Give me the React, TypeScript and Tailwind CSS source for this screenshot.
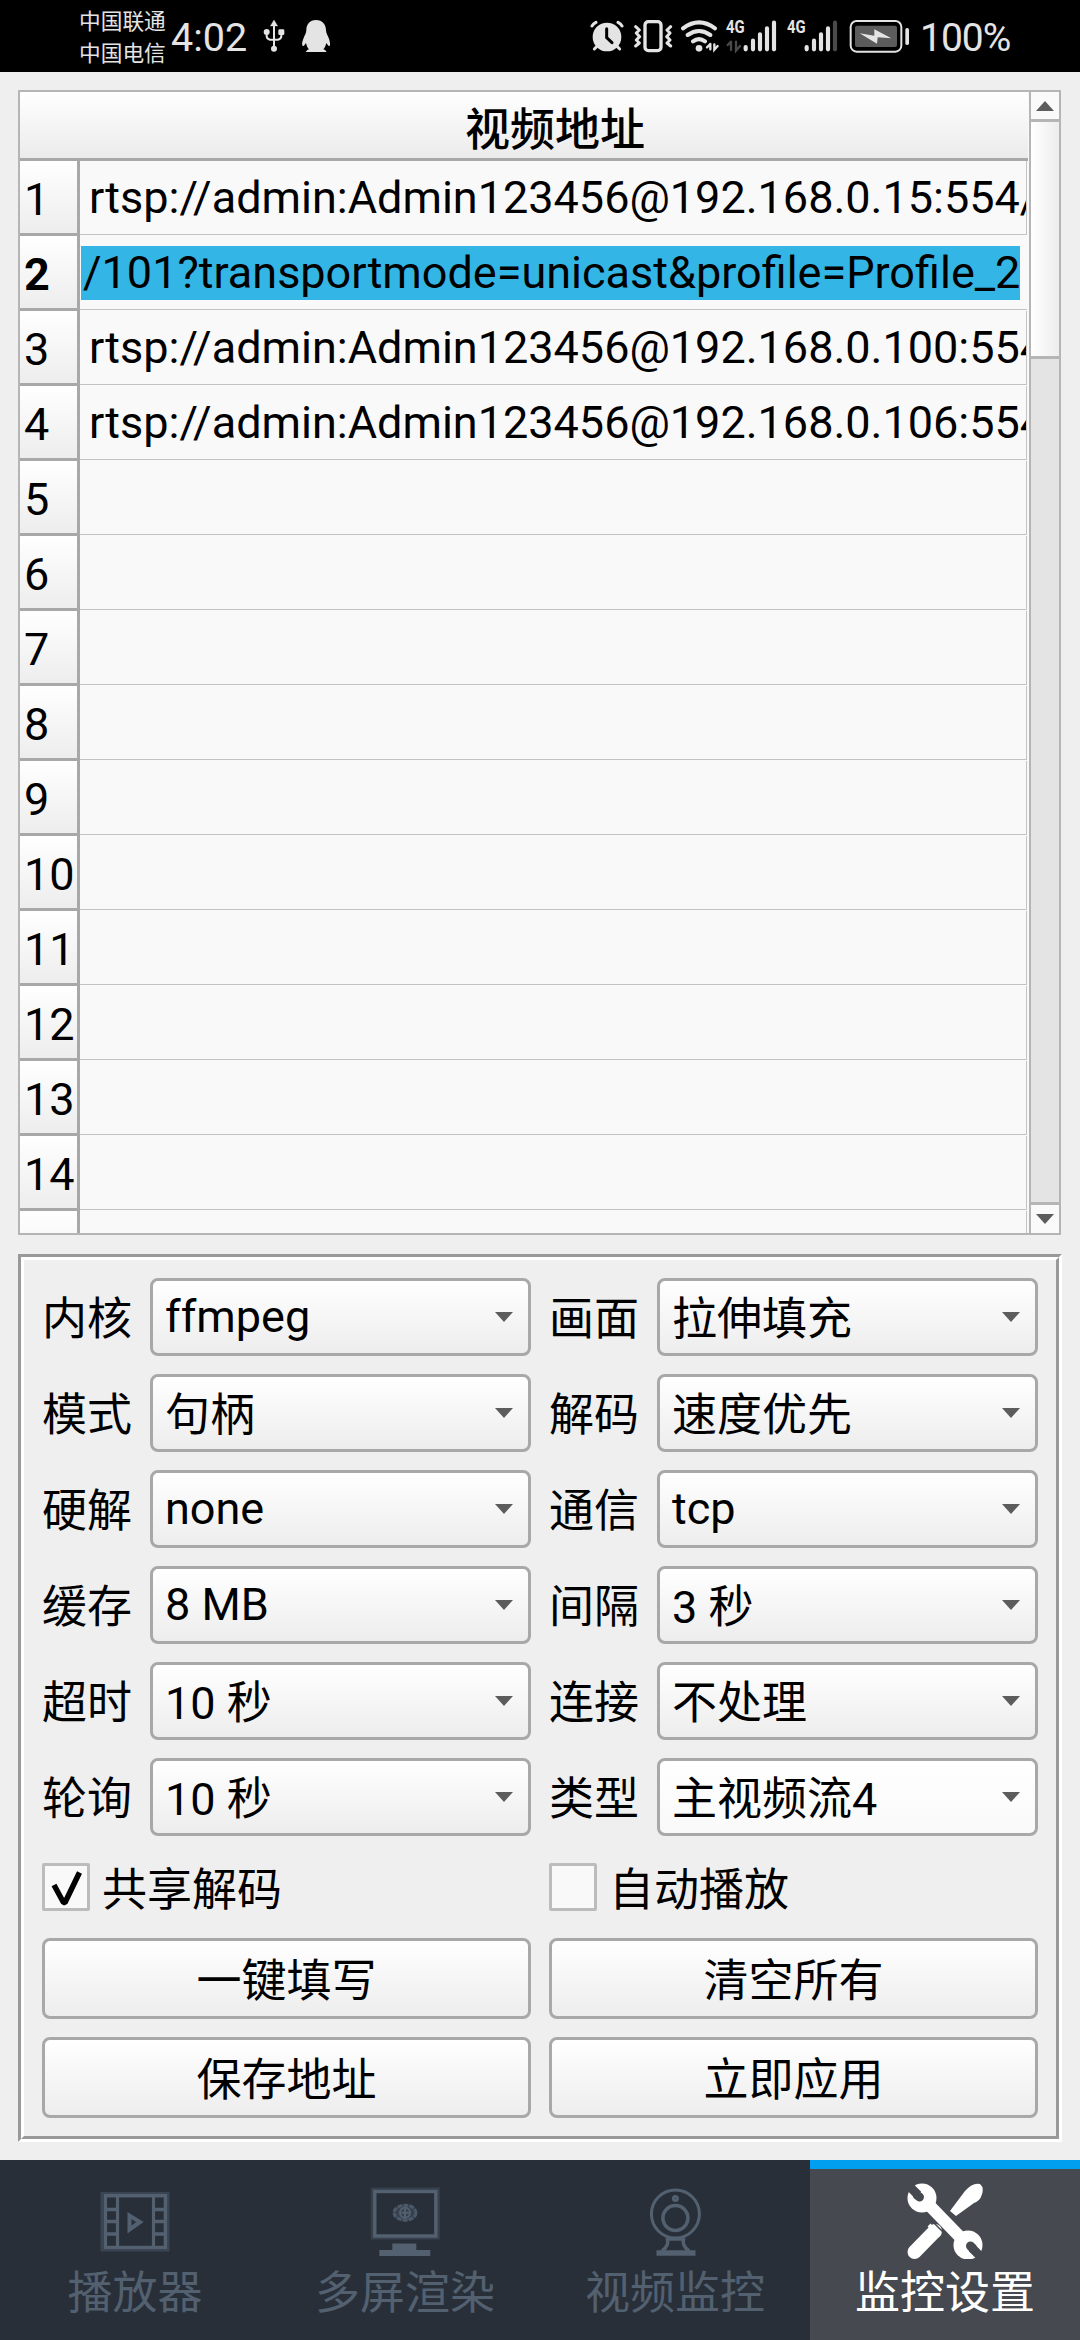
import React from "react";

const rows: string[] = [
  "rtsp://admin:Admin123456@192.168.0.15:554/",
  "/101?transportmode=unicast&profile=Profile_2",
  "rtsp://admin:Admin123456@192.168.0.100:554",
  "rtsp://admin:Admin123456@192.168.0.106:554",
  "", "", "", "", "", "", "", "", "", "", "",
];

const fields: [string, string, boolean?][] = [
  ["内核", "ffmpeg"],
  ["画面", "拉伸填充"],
  ["模式", "句柄"],
  ["解码", "速度优先"],
  ["硬解", "none"],
  ["通信", "tcp"],
  ["缓存", "8 MB"],
  ["间隔", "3 秒"],
  ["超时", "10 秒"],
  ["连接", "不处理"],
  ["轮询", "10 秒"],
  ["类型", "主视频流4", true],
];

const hasCjk = (s: string) => /[\u4e00-\u9fff]/.test(s);

function Signal({ full }: { full: boolean }) {
  return (
    <div className="relative h-[34px] w-[52px]">
      <span className="absolute left-0 top-0 origin-left scale-x-[0.85] text-[17.5px] font-bold leading-[17px]">4G</span>
      <svg className="block h-[34px] w-[52px]" viewBox="468 57 156 102" stroke="#e4e4e4" strokeWidth="12.5" strokeLinecap="round">
        {full && (
          <path d="M483 125 V150 M483 125 L473 135 M498 125 V152 L510 138" stroke="#4a4a4a" strokeWidth="7" fill="none" />
        )}
        <path d="M527 141V148M549 122V148M570 103V148M591 85V148" />
        <path d="M612 68V148" stroke={full ? "#e4e4e4" : "#4a4a4a"} />
      </svg>
    </div>
  );
}

function StatusBar() {
  return (
    <div className="flex h-[72px] shrink-0 items-start bg-black text-[#e4e4e4]">
      <div className="ml-[79px] flex w-[90px] flex-col pt-[6px] text-[21.7px] leading-[32px]">
        <span className="h-8">中国联通</span>
        <span className="h-8">中国电信</span>
      </div>
      <span className="ml-[2px] w-[92px] pt-[14px] text-[39.5px] leading-[48px]">4:02</span>
      <svg className="mt-[19px] h-[34px] w-[22px]" viewBox="609 57 66 102" fill="#e4e4e4" stroke="#e4e4e4">
        <path d="M642 60l11 18h-22z" strokeWidth="1" />
        <path d="M642 74V146M620 98V108Q620 117 630 119L654 119Q664 117 664 108V98" fill="none" strokeWidth="6" />
        <circle cx="642" cy="146" r="9" stroke="none" />
        <circle cx="620" cy="96" r="9" stroke="none" />
        <rect x="655" y="88" width="18" height="17" rx="4" stroke="none" />
      </svg>
      <svg className="ml-4 mt-[19px] h-[34px] w-[30px]" viewBox="723 57 90 102" fill="#e4e4e4">
        <path d="M768 60C749 60 739 74 739 91C739 99 734 106 730 116C726 126 725 136 729 138C732 139 736 132 738 129C740 138 743 144 747 148C741 150 738 153 738 156H799C799 153 796 150 790 148C794 144 797 138 799 129C801 132 805 139 808 138C812 136 810 126 807 116C803 106 798 99 798 91C798 74 787 60 768 60Z" />
      </svg>
      <div className="ml-[259px] flex items-start pt-[19px]">
        <svg className="h-[34px] w-[34px]" viewBox="60 57 102 102" fill="none" stroke="#e4e4e4" strokeLinecap="round">
          <circle cx="111" cy="111" r="43" fill="#e4e4e4" stroke="none" />
          <path d="M66 78Q70 71 78 67M144 67Q152 71 156 78" strokeWidth="9" />
          <path d="M80 140L73 147M142 140L149 147" strokeWidth="9" />
          <path d="M110 86V113L126 128" stroke="#000" strokeWidth="9" />
        </svg>
        <svg className="ml-[10px] h-[34px] w-[39px]" viewBox="192 57 117 102" fill="none" stroke="#e4e4e4" strokeLinecap="round" strokeLinejoin="round">
          <rect x="225" y="65" width="48" height="87" rx="10" strokeWidth="10" />
          <path d="M197 80l11 10-9 9 10 11-10 10 9 9-11 9M302 80l-11 10 9 9-10 11 10 10-9 9 11 9" strokeWidth="9" />
        </svg>
        <svg className="ml-2 h-[34px] w-[39px]" viewBox="333 57 117 102" fill="none" stroke="#e4e4e4" strokeWidth="12" strokeLinecap="round">
          <path d="M339 85Q387 49 435 85M353 105Q387 81 421 105M369 124Q387 111 405 124" />
          <circle cx="387" cy="145" r="10" fill="#e4e4e4" stroke="none" />
          <path d="M421 132V148M421 132L411 142M433 133V149L443 138" strokeWidth="7" />
        </svg>
        <div className="ml-[6px]"><Signal full /></div>
        <div className="ml-[9px]"><Signal full={false} /></div>
        <svg className="ml-[10px] h-[34px] w-[62px]" viewBox="837 57 186 102">
          <rect x="842" y="63" width="152" height="92" rx="18" fill="none" stroke="#e4e4e4" strokeWidth="6" />
          <rect x="855" y="77" width="126" height="64" rx="6" fill="#5c5c5c" />
          <path d="M869 100L913 107L913 88L964 115L923 112L921 131Z" fill="#e4e4e4" />
          <rect x="1006" y="84" width="11" height="51" rx="5" fill="#e4e4e4" />
        </svg>
      </div>
      <span className="ml-[9px] pt-[14px] text-[39px] leading-[48px] tracking-[-1px]">100%</span>
    </div>
  );
}

function Tri({ up }: { up?: boolean }) {
  return (
    <svg className="block h-[10px] w-[18px]" viewBox="0 0 18 10">
      <path d={up ? "M0 10L9 0L18 10Z" : "M0 0H18L9 10Z"} fill="#5c5c5c" />
    </svg>
  );
}

function AddressTable() {
  return (
    <div className="flex h-[1145px] w-[1043px] shrink-0 overflow-hidden border-2 border-[#b5b5b5] bg-[#f9f9f9]">
      <div className="flex w-[1008px] flex-col">
        <div className="h-[69px] shrink-0 border-b-[3px] border-[#a8a8a8] bg-linear-to-b from-white to-[#ebebeb] pl-[62px] text-center font-medium leading-[69px]">
          <span className="relative top-[4px]">视频地址</span>
        </div>
        {rows.map((text, i) => (
          <div key={i} className="flex h-[75px] shrink-0">
            <div className={`w-[60px] shrink-0 border-b-[3px] border-r-[3px] border-[#a8a8a8] bg-linear-to-b from-white to-[#ededed] pl-[4px] leading-[77px] ${i === 1 ? "font-bold" : ""}`}>
              {i < 14 ? i + 1 : ""}
            </div>
            {i === 1 ? (
              <div className="h-[74px] w-[947px] border-b border-[#c3c3c3] pl-[1px] pt-[10px]">
                <div className="h-[54px] w-[939px] whitespace-nowrap bg-[#33b5e5] pl-[2px] leading-[53px]">{text}</div>
              </div>
            ) : (
              <div className="h-[74px] w-[947px] overflow-hidden whitespace-nowrap border-b border-r border-[#c3c3c3] pl-[9px] leading-[74px]">{text}</div>
            )}
          </div>
        ))}
      </div>
      <div className="ml-[1px] flex w-[30px] flex-col border-l-2 border-[#b5b5b5] bg-[#e4e4e4]">
        <div className="flex h-[30px] items-center justify-center border-b-[3px] border-[#b5b5b5] bg-[#fafafa] pr-[1px]"><Tri up /></div>
        <div className="h-[237px] border-b-[3px] border-[#b5b5b5] bg-linear-to-r from-white to-[#ededed]" />
        <div className="flex-1" />
        <div className="flex h-[31px] items-center justify-center border-t-[3px] border-[#b5b5b5] bg-[#fafafa] pr-[1px]"><Tri /></div>
      </div>
    </div>
  );
}

function Label({ text }: { text: string }) {
  return <span className="relative top-[3px] w-[90px] leading-[78px]">{text}</span>;
}

function Combo({ value, flat }: { value: string; flat?: boolean }) {
  return (
    <div className={`flex h-[78px] items-center justify-between rounded-[8px] border-[3px] border-[#a8a8a8] pl-[12px] pr-[15px] ${flat ? "bg-linear-to-b from-white to-[#f9f9f9]" : "bg-linear-to-b from-white to-[#ededed]"}`}>
      <span className={`whitespace-pre leading-[72px] ${hasCjk(value) ? "relative top-[3px]" : ""}`}>{value}</span>
      <Tri />
    </div>
  );
}

function Check({ text, checked }: { text: string; checked?: boolean }) {
  return (
    <label className="col-span-2 flex h-[66px] items-center">
      <span className="flex size-12 items-center justify-center rounded-[2px] border-[3px] border-[#bcbcbc] bg-[#f9f9f9]">
        {checked && (
          <svg className="size-[42px]" viewBox="0 0 42 42" fill="none" stroke="#000" strokeWidth="5.5" strokeLinejoin="bevel">
            <path d="M9 19L18.5 36.5H20L34.5 6.5" />
          </svg>
        )}
      </span>
      <span className="relative top-[4px] ml-[12px]">{text}</span>
    </label>
  );
}

function PushButton({ text }: { text: string }) {
  return (
    <button className="col-span-2 h-[81px] rounded-[8px] border-[3px] border-[#a8a8a8] bg-linear-to-b from-white to-[#ededed] leading-[75px]">
      <span className="relative top-[3px]">{text}</span>
    </button>
  );
}

function SettingsPanel() {
  return (
    <div className="mt-[19px] w-[1044px] shrink-0 border-[3px] border-b-white border-l-[#999] border-r-white border-t-[#999]">
      <div className="grid grid-cols-[90px_381px_90px_381px] gap-[18px] border-[3px] border-b-[#999] border-l-white border-r-[#999] border-t-white p-[18px]">
        {fields.map(([label, value, flat]) => (
          <React.Fragment key={label}>
            <Label text={label} />
            <Combo value={value} flat={flat} />
          </React.Fragment>
        ))}
        <Check text="共享解码" checked />
        <Check text="自动播放" />
        <PushButton text="一键填写" />
        <PushButton text="清空所有" />
        <PushButton text="保存地址" />
        <PushButton text="立即应用" />
      </div>
    </div>
  );
}

const FilmIcon = () => (
  <svg className="size-[76px]" viewBox="98 2183 76 76" fill="none" stroke="#526070">
    <rect x="104.5" y="2195" width="63" height="53.5" strokeWidth="6" opacity="0.45" />
    <path d="M106.5 2195.500H166.500V2247.500H106.500ZM118.500 2195V2248M154.500 2195V2248" strokeWidth="3.2" />
    <path d="M106 2209.500H118M106 2221.500H118M106 2234H118M155 2209.500H167M155 2221.500H167M155 2234H167" strokeWidth="3.4" />
    <path d="M130.500 2215.500V2229.500L141 2222Z" strokeWidth="4" />
  </svg>
);

const MonitorIcon = () => (
  <svg className="size-[76px]" viewBox="368.700 2183 76 76" fill="none" stroke="#526070">
    <rect x="375" y="2190" width="64" height="47" strokeWidth="5" opacity="0.35" />
    <rect x="376.500" y="2191.500" width="61" height="44.500" strokeWidth="3.400" />
    <path d="M394 2243.500h24v7h-24zM381 2250h51v6h-51z" fill="#526070" stroke="none" />
    <ellipse cx="406.700" cy="2212.700" rx="11" ry="7.500" strokeWidth="3" strokeDasharray="5 1" fill="#3a4451" opacity="0.85" />
    <circle cx="406.700" cy="2212.700" r="5" strokeWidth="2" />
    <path d="M406.700 2209v8M403 2212.700h8" strokeWidth="2" />
  </svg>
);

const WebcamIcon = () => (
  <svg className="size-[76px]" viewBox="638 2183 76 76" fill="none" stroke="#526070" strokeWidth="3">
    <circle cx="676.400" cy="2214" r="24" />
    <circle cx="676.400" cy="2218" r="12.500" strokeWidth="3.500" />
    <circle cx="676.400" cy="2198.500" r="2" />
    <path d="M668 2238Q671 2245 663 2251M685 2238Q682 2245 690 2251M668 2239H685" strokeWidth="3.500" />
    <path d="M657.500 2253H696.500" strokeWidth="5.500" />
  </svg>
);

const ToolsIcon = () => (
  <svg className="size-[76px]" viewBox="0 0 76 76" fill="none" stroke="#fff">
    <circle cx="15" cy="15" r="14.500" fill="#fff" stroke="none" />
    <circle cx="61" cy="62" r="14.500" fill="#fff" stroke="none" />
    <path d="M11 12L-1 0M65 65L78 78" stroke="#464950" strokeWidth="9" />
    <path d="M10.500 12.500L12.500 14M65.500 65L63.500 63" stroke="#464950" strokeWidth="9" strokeLinecap="round" />
    <path d="M23 23L54 55" strokeWidth="12" />
    <path d="M7.500 69L28 48" strokeWidth="14" strokeLinecap="round" />
    <path d="M22 42L33 53" strokeWidth="4" />
    <path d="M43 28L58 8Q66 -1 73 1Q78 5 74 14Q72 18 67 20L49 33Z" fill="#fff" stroke="none" />
    <path d="M27 40L38 51" stroke="#464950" strokeWidth="1.500" />
  </svg>
);

const tabs = [
  { text: "播放器", Icon: FilmIcon },
  { text: "多屏渲染", Icon: MonitorIcon },
  { text: "视频监控", Icon: WebcamIcon },
  { text: "监控设置", Icon: ToolsIcon },
];

function TabBar() {
  return (
    <nav className="mt-auto grid h-[180px] grid-cols-4 bg-[#282f39]">
      {tabs.map(({ text, Icon }, i) => (
        <div key={text} className={`flex flex-col items-center border-t-[9px] pt-[14px] ${i === 3 ? "border-[#009ff0] bg-[#464950] text-white" : "border-transparent text-[#526070]"}`}>
          <Icon />
          <span className="mt-[5px] leading-[60px]">{text}</span>
        </div>
      ))}
    </nav>
  );
}

export default function App() {
  return (
    <div className="flex h-[2340px] w-[1080px] flex-col overflow-hidden bg-[#efefef] font-['Roboto','Noto_Sans_CJK_SC',sans-serif] text-[45px] leading-[60px] text-black">
      <StatusBar />
      <main className="flex flex-col pl-[18px] pt-[18px]">
        <AddressTable />
        <SettingsPanel />
      </main>
      <TabBar />
    </div>
  );
}
